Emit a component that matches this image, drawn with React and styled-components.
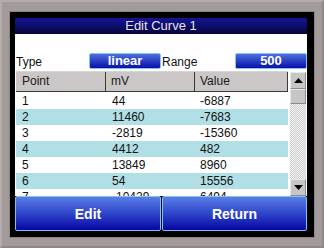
import React from "react";
import styled, { createGlobalStyle } from "styled-components";

const Global = createGlobalStyle`
  html, body { margin: 0; padding: 0; background: #a29b99; }
  body { font-family: "Liberation Sans", Arial, sans-serif; }
`;

const Bezel = styled.div`
  width: 324px;
  height: 248px;
  box-sizing: border-box;
  background: #a29b99;
  padding: 12px 10px 11px 10px;
  border-top: 2px solid #b3acaa;
  border-left: 2px solid #b3acaa;
  border-right: 2px solid #8f8886;
  border-bottom: 2px solid #8f8886;
  display: flex;
`;

const Screen = styled.div`
  flex: 1;
  background: #000;
  padding: 6px 7px 6px 5px;
  display: flex;
  flex-direction: column;
  margin: -2px;
  box-shadow: 0 0 0 1px #8c8583;
`;

const TitleBar = styled.div`
  height: 16px;
  background: linear-gradient(#14149a, #05053a);
  color: #e6e6e6;
  font-size: 13px;
  line-height: 16px;
  text-align: center;
`;

const Content = styled.div`
  background: #fff;
  height: 162px;
  display: flex;
  flex-direction: column;
  padding-top: 19px;
  box-sizing: border-box;
  overflow: hidden;
`;

const ParamRow = styled.div`
  display: grid;
  grid-template-columns: 74px 72px 74px 72px;
  height: 16px;
  align-items: center;
`;

const Label = styled.div`
  font-size: 12px;
  color: #111;
  padding-left: 1px;
  padding-top: 2px;
`;

const ValueButton = styled.div`
  height: 16px;
  box-sizing: border-box;
  border: 1px solid #7fc4ef;
  border-radius: 2px;
  background: linear-gradient(#4c6fe0, #0a10a8);
  color: #fff;
  font-weight: bold;
  font-size: 13px;
  line-height: 14px;
  text-align: center;
`;

const TableArea = styled.div`
  margin-top: 2px;
  display: flex;
  gap: 2px;
  padding-left: 1px;
  flex: 1;
  min-height: 0;
`;

const Grid = styled.div`
  width: 272px;
  display: flex;
  flex-direction: column;
`;

const HeaderRow = styled.div`
  display: grid;
  grid-template-columns: 90px 89px 93px;
  height: 19px;
  background: #cbc7c7;
  border-top: 1px solid #d8d4d4;
  border-bottom: 1px solid #3a3a3a;
  margin-bottom: 1px;
`;

const HeaderCell = styled.div`
  font-size: 12px;
  color: #1a1a1a;
  line-height: 19px;
  padding-left: ${(p) => p.$pad}px;
  border-right: 1px solid #3a3a3a;
`;

const Row = styled.div`
  display: grid;
  grid-template-columns: 90px 89px 93px;
  height: 16px;
  background: ${(p) => (p.$alt ? "#b0e0e6" : "#fff")};
  flex-shrink: 0;
`;

const Cell = styled.div`
  font-size: 12px;
  color: #111;
  line-height: 16px;
  padding-left: ${(p) => p.$pad}px;
`;

const Scrollbar = styled.div`
  width: 16px;
  display: flex;
  flex-direction: column;
  background-color: #e2e2e2;
  background-image: repeating-conic-gradient(#cfcfcf 0% 25%, #f2f2f2 0% 50%);
  background-size: 2px 2px;
  margin-top: 1px;
`;

const ScrollBtn = styled.div`
  height: 17px;
  box-sizing: border-box;
  background: #c6c6c6;
  border: 1px solid #8a8a8a;
  border-top-color: #e8e8e8;
  border-left-color: #e8e8e8;
  display: flex;
  align-items: center;
  justify-content: center;
  margin-top: ${(p) => (p.$bottom ? "auto" : "0")};
`;

const Thumb = styled.div`
  height: 15px;
  box-sizing: border-box;
  background: #c6c6c6;
  border: 1px solid #8a8a8a;
  border-top-color: #e8e8e8;
  border-left-color: #e8e8e8;
`;

const ButtonBar = styled.div`
  display: flex;
  gap: 1px;
  height: 35px;
`;

const BigButton = styled.div`
  flex: ${(p) => p.$w};
  box-sizing: border-box;
  border: 1px solid #7fc4ef;
  border-radius: 2px;
  background: linear-gradient(#5a7ee6, #2a3fc8 55%, #0606a0);
  color: #fff;
  font-weight: bold;
  font-size: 14px;
  display: flex;
  align-items: center;
  justify-content: center;
`;

const Arrow = ({ up }) => (
  <svg width="9" height="5" viewBox="0 0 9 5">
    <polygon points={up ? "0,5 9,5 4.5,0" : "0,0 9,0 4.5,5"} fill="#000" />
  </svg>
);

const rows = [
  ["1", "44", "-6887"],
  ["2", "11460", "-7683"],
  ["3", "-2819", "-15360"],
  ["4", "4412", "482"],
  ["5", "13849", "8960"],
  ["6", "54", "15556"],
  ["7", "-10429", "6494"],
];

export default function App() {
  return (
    <>
      <Global />
      <Bezel>
        <Screen>
          <TitleBar>Edit Curve 1</TitleBar>
          <Content>
            <ParamRow>
              <Label>Type</Label>
              <ValueButton>linear</ValueButton>
              <Label>Range</Label>
              <ValueButton>500</ValueButton>
            </ParamRow>
            <TableArea>
              <Grid>
                <HeaderRow>
                  <HeaderCell $pad={6}>Point</HeaderCell>
                  <HeaderCell $pad={5}>mV</HeaderCell>
                  <HeaderCell $pad={5}>Value</HeaderCell>
                </HeaderRow>
                {rows.map((r, i) => (
                  <Row key={r[0]} $alt={i % 2 === 1}>
                    <Cell $pad={6}>{r[0]}</Cell>
                    <Cell $pad={6}>{r[1]}</Cell>
                    <Cell $pad={5}>{r[2]}</Cell>
                  </Row>
                ))}
              </Grid>
              <Scrollbar>
                <ScrollBtn>
                  <Arrow up />
                </ScrollBtn>
                <Thumb />
                <ScrollBtn $bottom>
                  <Arrow />
                </ScrollBtn>
              </Scrollbar>
            </TableArea>
          </Content>
          <ButtonBar>
            <BigButton $w={146}>Edit</BigButton>
            <BigButton $w={145}>Return</BigButton>
          </ButtonBar>
        </Screen>
      </Bezel>
    </>
  );
}
